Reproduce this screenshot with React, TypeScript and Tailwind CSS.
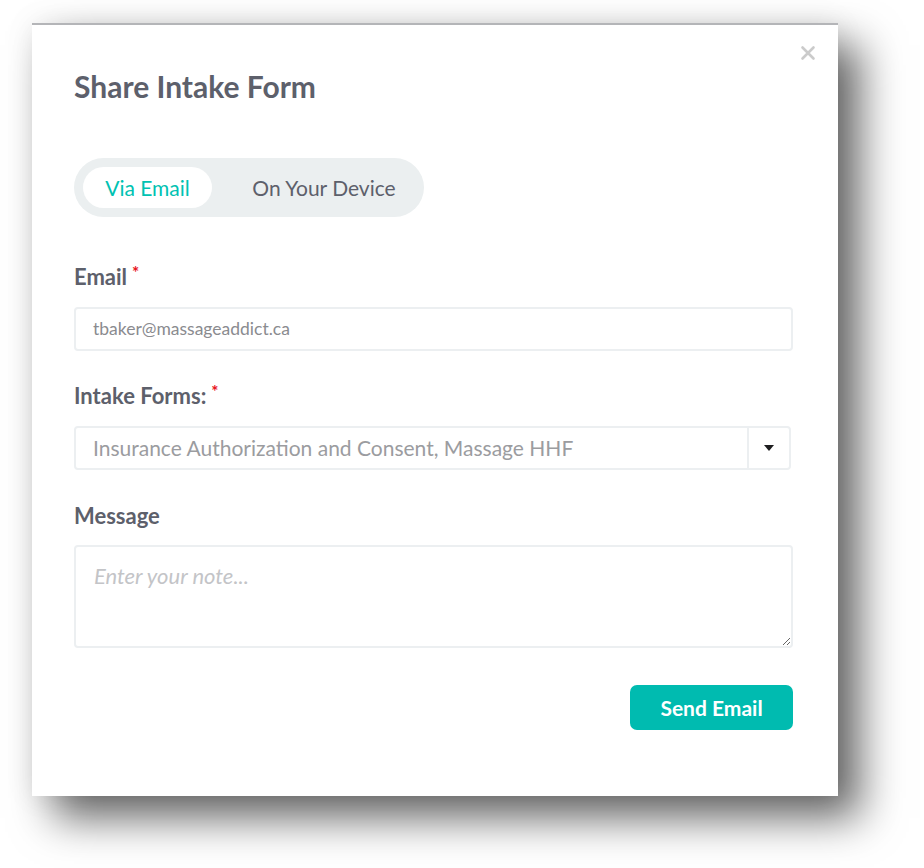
import React, { useState } from 'react';

const font = { fontFamily: 'Lato, "Open Sans", sans-serif' };

function Label({ text }: { text: string }) {
  return (
    <div className="flex items-start text-[22px] leading-[24px] font-bold text-[#5d606b]">
      <span>{text}</span>
      <span className="ml-[5px] text-[17px] leading-[16px] text-[#e8131b]">*</span>
    </div>
  );
}

export default function App() {
  const [mode, setMode] = useState<'email' | 'device'>('email');

  return (
    <div className="min-h-screen bg-white pl-[32px] pt-[23px]" style={font}>
      <div className="relative flex h-[773px] w-[806px] flex-col border-t-2 border-[#b4b5b8] bg-white pl-[42px] pr-[45px] pt-[45px] shadow-[22px_22px_40px_rgba(0,0,0,0.6),0_0_28px_rgba(0,0,0,0.08)]">
        <button className="absolute right-[22px] top-[20px] text-[#cbcbcb]" aria-label="Close">
          <svg width="16" height="16" viewBox="0 0 16 16" fill="none" stroke="currentColor" strokeWidth="2.6" strokeLinecap="round">
            <path d="M2.5 2.5L13.5 13.5M13.5 2.5L2.5 13.5" />
          </svg>
        </button>

        <h1 className="text-[30px] leading-[32px] font-bold text-[#5d606b]">Share Intake Form</h1>

        <div className="mt-[56px] flex h-[59px] w-[350px] items-center rounded-full bg-[#ebeff0] px-[9px]">
          <button
            onClick={() => setMode('email')}
            className={`h-[41px] w-[129px] rounded-full text-[21px] ${mode === 'email' ? 'bg-white text-[#00c2b2]' : 'text-[#5d606b]'}`}
          >
            Via Email
          </button>
          <button
            onClick={() => setMode('device')}
            className={`ml-[27px] h-[41px] w-[170px] rounded-full text-[21px] ${mode === 'device' ? 'bg-white text-[#00c2b2]' : 'text-[#5d606b]'}`}
          >
            On Your Device
          </button>
        </div>

        <div className="mt-[48px]">
          <Label text="Email" />
        </div>
        <div className="mt-[18px] flex h-[44px] w-[719px] items-center rounded-[4px] border-2 border-[#eceff1] px-[17px] text-[17.5px] text-[#8a8b8f]">
          tbaker@massageaddict.ca
        </div>

        <div className="mt-[33px]">
          <Label text="Intake Forms:" />
        </div>
        <div className="mt-[18px] flex h-[44px] w-[717px] items-center rounded-[4px] border-2 border-[#eceff1]">
          <div className="flex-1 px-[17px] text-[21px] text-[#9b9ca0]">
            Insurance Authorization and Consent, Massage HHF
          </div>
          <div className="flex h-full w-[42px] items-center justify-center border-l-2 border-[#eceff1]">
            <svg width="10" height="6" viewBox="0 0 10 6">
              <path d="M0 0H10L5 6Z" fill="#1d1d1f" />
            </svg>
          </div>
        </div>

        <div className="mt-[34px] text-[22px] leading-[24px] font-bold text-[#5d606b]">Message</div>
        <textarea
          placeholder="Enter your note..."
          className="mt-[17px] h-[103px] w-[719px] rounded-[4px] border-2 border-[#eceff1] px-[18px] pb-[16px] pt-[12px] text-[22px] italic text-[#5d606b] outline-none placeholder:text-[#c3c4c7]"
          style={font}
        />

        <div className="mt-[37px] flex w-[719px] justify-end">
          <button className="h-[45px] w-[163px] rounded-[7px] bg-[#00bbb0] text-[21px] font-bold text-white">
            Send Email
          </button>
        </div>
      </div>
    </div>
  );
}
